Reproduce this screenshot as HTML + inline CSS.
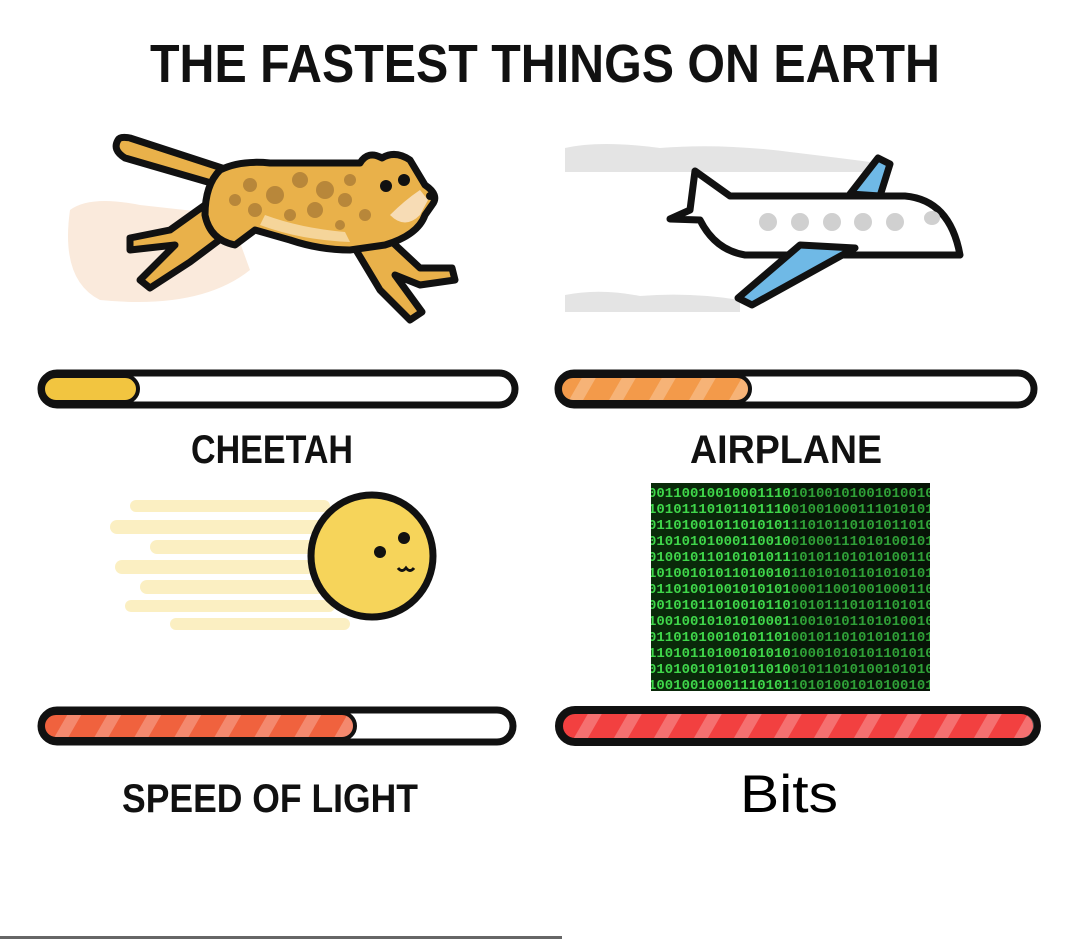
<!DOCTYPE html>
<html><head><meta charset="utf-8"><style>
html,body{margin:0;padding:0;background:#fff;width:1080px;height:940px;overflow:hidden}
.t{font-family:"Liberation Sans Narrow","Liberation Sans",sans-serif;font-weight:bold}
</style></head><body>
<svg width="1080" height="940" viewBox="0 0 1080 940" xmlns="http://www.w3.org/2000/svg">
<defs>
<pattern id="st" width="40" height="40" patternUnits="userSpaceOnUse" patternTransform="skewX(-30)">
<rect width="40" height="40" fill="none"/><rect x="0" width="14" height="40" fill="#fff" opacity="0.25"/>
</pattern>
<clipPath id="bc"><rect x="651" y="483" width="279" height="208"/></clipPath>
<linearGradient id="bg" x1="0" x2="1"><stop offset="0" stop-color="#0a2a0a"/><stop offset="1" stop-color="#0a1a0a"/></linearGradient>
</defs>
<rect width="1080" height="940" fill="#fff"/>
<text x="545" y="82" text-anchor="middle" class="t" font-size="54" fill="#111" textLength="790" lengthAdjust="spacingAndGlyphs">THE FASTEST THINGS ON EARTH</text>

<!-- cheetah -->
<path d="M70 210 Q90 195 140 205 L230 215 L250 270 Q200 310 100 300 Q60 280 70 210Z" fill="#faeadc"/>
<g stroke="#111" stroke-width="7" stroke-linejoin="round" stroke-linecap="round">
<path d="M118 140 Q112 150 125 158 L218 185 L222 168 L130 138 Q120 136 118 140Z" fill="#e9b14a"/>
<path d="M205 205 L170 230 L130 238 L130 250 L175 245 L150 270 L140 280 L150 288 L190 262 L230 232 Z" fill="#e9b14a"/>
<path d="M350 240 L380 290 L410 320 L422 312 L395 275 L420 285 L455 280 L452 268 L420 268 L390 240Z" fill="#e9b14a"/>
<path d="M220 170 Q240 160 270 163 L360 163 Q368 150 382 158 Q395 150 410 160 L425 185 Q440 195 432 205 L425 215 Q418 235 385 245 L350 250 Q320 250 290 240 L255 230 L235 245 Q210 240 205 215 Q205 185 220 170Z" fill="#e9b14a"/>
</g>
<path d="M390 215 Q405 230 420 215 L428 200 L420 190 Q405 200 390 215Z" fill="#f7dcb5"/>
<path d="M260 225 Q300 240 350 242 L345 232 Q300 228 265 215Z" fill="#f5d59a"/>
<g fill="#b8873a">
<circle cx="250" cy="185" r="7"/><circle cx="275" cy="195" r="9"/><circle cx="300" cy="180" r="8"/><circle cx="325" cy="190" r="9"/><circle cx="315" cy="210" r="8"/><circle cx="345" cy="200" r="7"/><circle cx="290" cy="215" r="6"/><circle cx="255" cy="210" r="7"/><circle cx="350" cy="180" r="6"/><circle cx="365" cy="215" r="6"/><circle cx="235" cy="200" r="6"/><circle cx="340" cy="225" r="5"/>
</g>
<circle cx="386" cy="186" r="6" fill="#111"/><circle cx="404" cy="180" r="6" fill="#111"/>
<circle cx="430" cy="196" r="4" fill="#111"/>

<!-- airplane -->
<path d="M565 148 Q600 140 660 148 Q720 143 790 152 Q840 158 870 162 L870 172 L565 172Z" fill="#e4e4e4"/>
<path d="M565 295 Q600 288 640 296 Q690 292 740 300 L740 312 L565 312Z" fill="#e4e4e4"/>
<g stroke="#111" stroke-width="7" stroke-linejoin="round">
<path d="M850 194 L878 158 L890 164 L880 196Z" fill="#6fb9e6"/>
<path d="M695 171 L730 196 L905 196 Q950 200 960 255 L745 255 Q715 250 700 220 L670 219 L690 210Z" fill="#fff"/>
<path d="M800 245 L738 298 L752 305 L855 248Z" fill="#6fb9e6"/>
</g>
<g fill="#d0d0d0"><circle cx="768" cy="222" r="9"/><circle cx="800" cy="222" r="9"/><circle cx="832" cy="222" r="9"/><circle cx="863" cy="222" r="9"/><circle cx="895" cy="222" r="9"/><ellipse cx="932" cy="218" rx="8" ry="7"/></g>

<!-- bars top -->
<rect x="41" y="373" width="474" height="32" rx="16" fill="#fff" stroke="#111" stroke-width="7"/>
<rect x="43" y="376" width="95" height="26" rx="13" fill="#f2c540" stroke="#111" stroke-width="4"/>
<rect x="558" y="373" width="476" height="32" rx="16" fill="#fff" stroke="#111" stroke-width="7"/>
<rect x="560" y="376" width="190" height="26" rx="13" fill="#f39a4a" stroke="#111" stroke-width="4"/>
<rect x="562" y="378" width="186" height="22" rx="11" fill="url(#st)"/>

<text x="272" y="463" text-anchor="middle" class="t" font-size="40" fill="#111" textLength="162" lengthAdjust="spacingAndGlyphs">CHEETAH</text>
<text x="786" y="463" text-anchor="middle" class="t" font-size="40" fill="#111" textLength="192" lengthAdjust="spacingAndGlyphs">AIRPLANE</text>

<!-- light -->
<g fill="#fbefc2">
<rect x="130" y="500" width="200" height="12" rx="6"/><rect x="110" y="520" width="230" height="14" rx="7"/><rect x="150" y="540" width="170" height="14" rx="7"/><rect x="115" y="560" width="200" height="14" rx="7"/><rect x="140" y="580" width="190" height="14" rx="7"/><rect x="125" y="600" width="210" height="12" rx="6"/><rect x="170" y="618" width="180" height="12" rx="6"/>
</g>
<circle cx="372" cy="556" r="61" fill="#f6d45a" stroke="#111" stroke-width="7"/>
<circle cx="380" cy="552" r="6" fill="#111"/><circle cx="404" cy="538" r="6" fill="#111"/>
<path d="M398 568 q4 5 8 0 q4 5 8 0" stroke="#111" stroke-width="3" fill="none"/>

<!-- binary -->
<rect x="651" y="483" width="279" height="208" fill="url(#bg)"/>
<g clip-path="url(#bc)" font-family="Liberation Mono,monospace" fill="#3fd64a" font-weight="bold">
<text x="648" y="497" font-size="14">0011001001000111010100101001010010</text>
<text x="648" y="513" font-size="14">1010111010110111001001000111010101</text>
<text x="648" y="529" font-size="14">0110100101101010111010110101011010</text>
<text x="648" y="545" font-size="14">0101010100011001001000111010100101</text>
<text x="648" y="561" font-size="14">0100101101010101110101101010100110</text>
<text x="648" y="577" font-size="14">1010010101101001011010101101010101</text>
<text x="648" y="593" font-size="14">0110100100101010100011001001000110</text>
<text x="648" y="609" font-size="14">0010101101001011010101110101101010</text>
<text x="648" y="625" font-size="14">1001001010101000110010101101010010</text>
<text x="648" y="641" font-size="14">0110101001010110100101101010101101</text>
<text x="648" y="657" font-size="14">1101011010010101010001010101101010</text>
<text x="648" y="673" font-size="14">0101001010101101001011010100101010</text>
<text x="648" y="689" font-size="14">1001001000111010110101001010100101</text>
</g>
<rect x="790" y="483" width="140" height="208" fill="#000" opacity="0.25"/>

<!-- bars bottom -->
<rect x="41" y="710" width="472" height="32" rx="16" fill="#fff" stroke="#111" stroke-width="7"/>
<rect x="43" y="713" width="312" height="26" rx="13" fill="#f0623e" stroke="#111" stroke-width="4"/>
<rect x="45" y="715" width="308" height="22" rx="11" fill="url(#st)"/>
<rect x="559" y="710" width="478" height="32" rx="16" fill="#f24040" stroke="#111" stroke-width="8"/>
<rect x="562" y="714" width="472" height="24" rx="12" fill="url(#st)"/>

<text x="270" y="812" text-anchor="middle" class="t" font-size="40" fill="#111" textLength="296" lengthAdjust="spacingAndGlyphs">SPEED OF LIGHT</text>
<text x="789" y="812" text-anchor="middle" font-family="Liberation Sans,sans-serif" font-size="53" fill="#000" textLength="98" lengthAdjust="spacingAndGlyphs">Bits</text>
<rect x="0" y="936" width="562" height="3" fill="#666"/>
</svg>
</body></html>
